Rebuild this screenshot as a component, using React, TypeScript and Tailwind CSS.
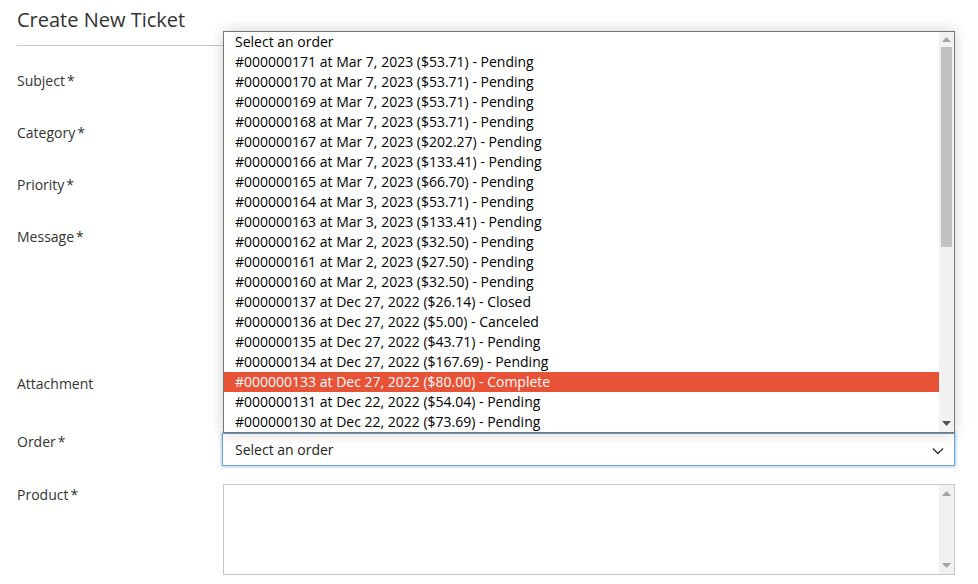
import React from "react";

const orders = [
  "#000000171 at Mar 7, 2023 ($53.71) - Pending",
  "#000000170 at Mar 7, 2023 ($53.71) - Pending",
  "#000000169 at Mar 7, 2023 ($53.71) - Pending",
  "#000000168 at Mar 7, 2023 ($53.71) - Pending",
  "#000000167 at Mar 7, 2023 ($202.27) - Pending",
  "#000000166 at Mar 7, 2023 ($133.41) - Pending",
  "#000000165 at Mar 7, 2023 ($66.70) - Pending",
  "#000000164 at Mar 3, 2023 ($53.71) - Pending",
  "#000000163 at Mar 3, 2023 ($133.41) - Pending",
  "#000000162 at Mar 2, 2023 ($32.50) - Pending",
  "#000000161 at Mar 2, 2023 ($27.50) - Pending",
  "#000000160 at Mar 2, 2023 ($32.50) - Pending",
  "#000000137 at Dec 27, 2022 ($26.14) - Closed",
  "#000000136 at Dec 27, 2022 ($5.00) - Canceled",
  "#000000135 at Dec 27, 2022 ($43.71) - Pending",
  "#000000134 at Dec 27, 2022 ($167.69) - Pending",
  "#000000133 at Dec 27, 2022 ($80.00) - Complete",
  "#000000131 at Dec 22, 2022 ($54.04) - Pending",
  "#000000130 at Dec 22, 2022 ($73.69) - Pending",
];

const Label = ({
  text,
  required = true,
  className = "",
}: {
  text: string;
  required?: boolean;
  className?: string;
}) => (
  <div className={`w-[206px] shrink-0 text-[14px] leading-[18px] text-[#333] ${className}`}>
    {text}
    {required && <span className="ml-[2px]">*</span>}
  </div>
);

const ArrowUp = ({ color }: { color: string }) => (
  <svg width="9" height="5" viewBox="0 0 9 5">
    <path d="M0 5 L4.5 0 L9 5 Z" fill={color} />
  </svg>
);

const ArrowDown = ({ color }: { color: string }) => (
  <svg width="9" height="5" viewBox="0 0 9 5">
    <path d="M0 0 L4.5 5 L9 0 Z" fill={color} />
  </svg>
);

export default function App() {
  return (
    <div className="relative w-[978px] h-[584px] overflow-hidden bg-white font-['Open_Sans',sans-serif] text-[#333]">
      <div className="pl-[17px] pr-[23px]">
        <h1 className="pt-[8px] text-[20px] leading-[24px] font-normal text-[#333]">
          Create New Ticket
        </h1>
        <div className="mt-[13px] border-t border-[#c6c6c6]" />

        <div className="mt-[26px] flex flex-col gap-[20px]">
          <div className="flex">
            <Label text="Subject" />
            <div className="flex-1 h-[32px] border border-[#c2c2c2]" />
          </div>
          <div className="flex">
            <Label text="Category" />
            <div className="flex-1 h-[32px] border border-[#c2c2c2]" />
          </div>
          <div className="flex">
            <Label text="Priority" />
            <div className="flex-1 h-[32px] border border-[#c2c2c2]" />
          </div>
          <div className="flex">
            <Label text="Message" />
            <div className="flex-1 h-[127px] border border-[#c2c2c2]" />
          </div>
          <div className="flex h-[38px]">
            <Label text="Attachment" required={false} />
            <div className="flex-1" />
          </div>
          <div className="flex">
            <Label text="Order" />
            <div className="flex-1 h-[33px] ml-[-1px] border border-[#6ea4cf] shadow-[0_0_3px_1px_#a9d0ef] flex items-center justify-between pl-[12px] pr-[10px] text-[14px] text-[#222]">
              <span>Select an order</span>
              <svg width="12" height="8" viewBox="0 0 12 8" className="mt-[2px]">
                <path d="M1 1.5 L6 6.5 L11 1.5" fill="none" stroke="#333" strokeWidth="1.4" />
              </svg>
            </div>
          </div>
          <div className="flex mt-[-2px]">
            <Label text="Product" className="pt-[2px]" />
            <div className="flex-1 h-[91px] border border-[#c8c8c8] flex justify-end">
              <div className="w-[15px] bg-[#f0f0f0] flex flex-col items-center justify-between py-[6px]">
                <ArrowUp color="#a3a3a3" />
                <ArrowDown color="#a3a3a3" />
              </div>
            </div>
          </div>
        </div>
      </div>

      {/* open order dropdown */}
      <div className="absolute left-[223px] top-[31px] w-[732px] h-[402px] border border-[#767676] bg-white shadow-[0_0_14px_rgba(0,0,0,0.18)] flex">
        <ul className="flex-1 text-[14px] leading-[20px] text-black">
          <li className="pl-[11px] h-[20px]">Select an order</li>
          {orders.map((o) => (
            <li
              key={o}
              className={
                o.startsWith("#000000133")
                  ? "pl-[11px] h-[20px] bg-[#e85236] text-white"
                  : "pl-[11px] h-[20px]"
              }
            >
              {o}
            </li>
          ))}
        </ul>
        <div className="w-[15px] bg-[#f1f1f1] flex flex-col items-center">
          <div className="pt-[5px] h-[15px] flex items-start">
            <ArrowUp color="#a3a3a3" />
          </div>
          <div className="w-[11px] h-[200px] bg-[#c1c1c1]" />
          <div className="flex-1" />
          <div className="pb-[6px]">
            <ArrowDown color="#505050" />
          </div>
        </div>
      </div>
    </div>
  );
}
